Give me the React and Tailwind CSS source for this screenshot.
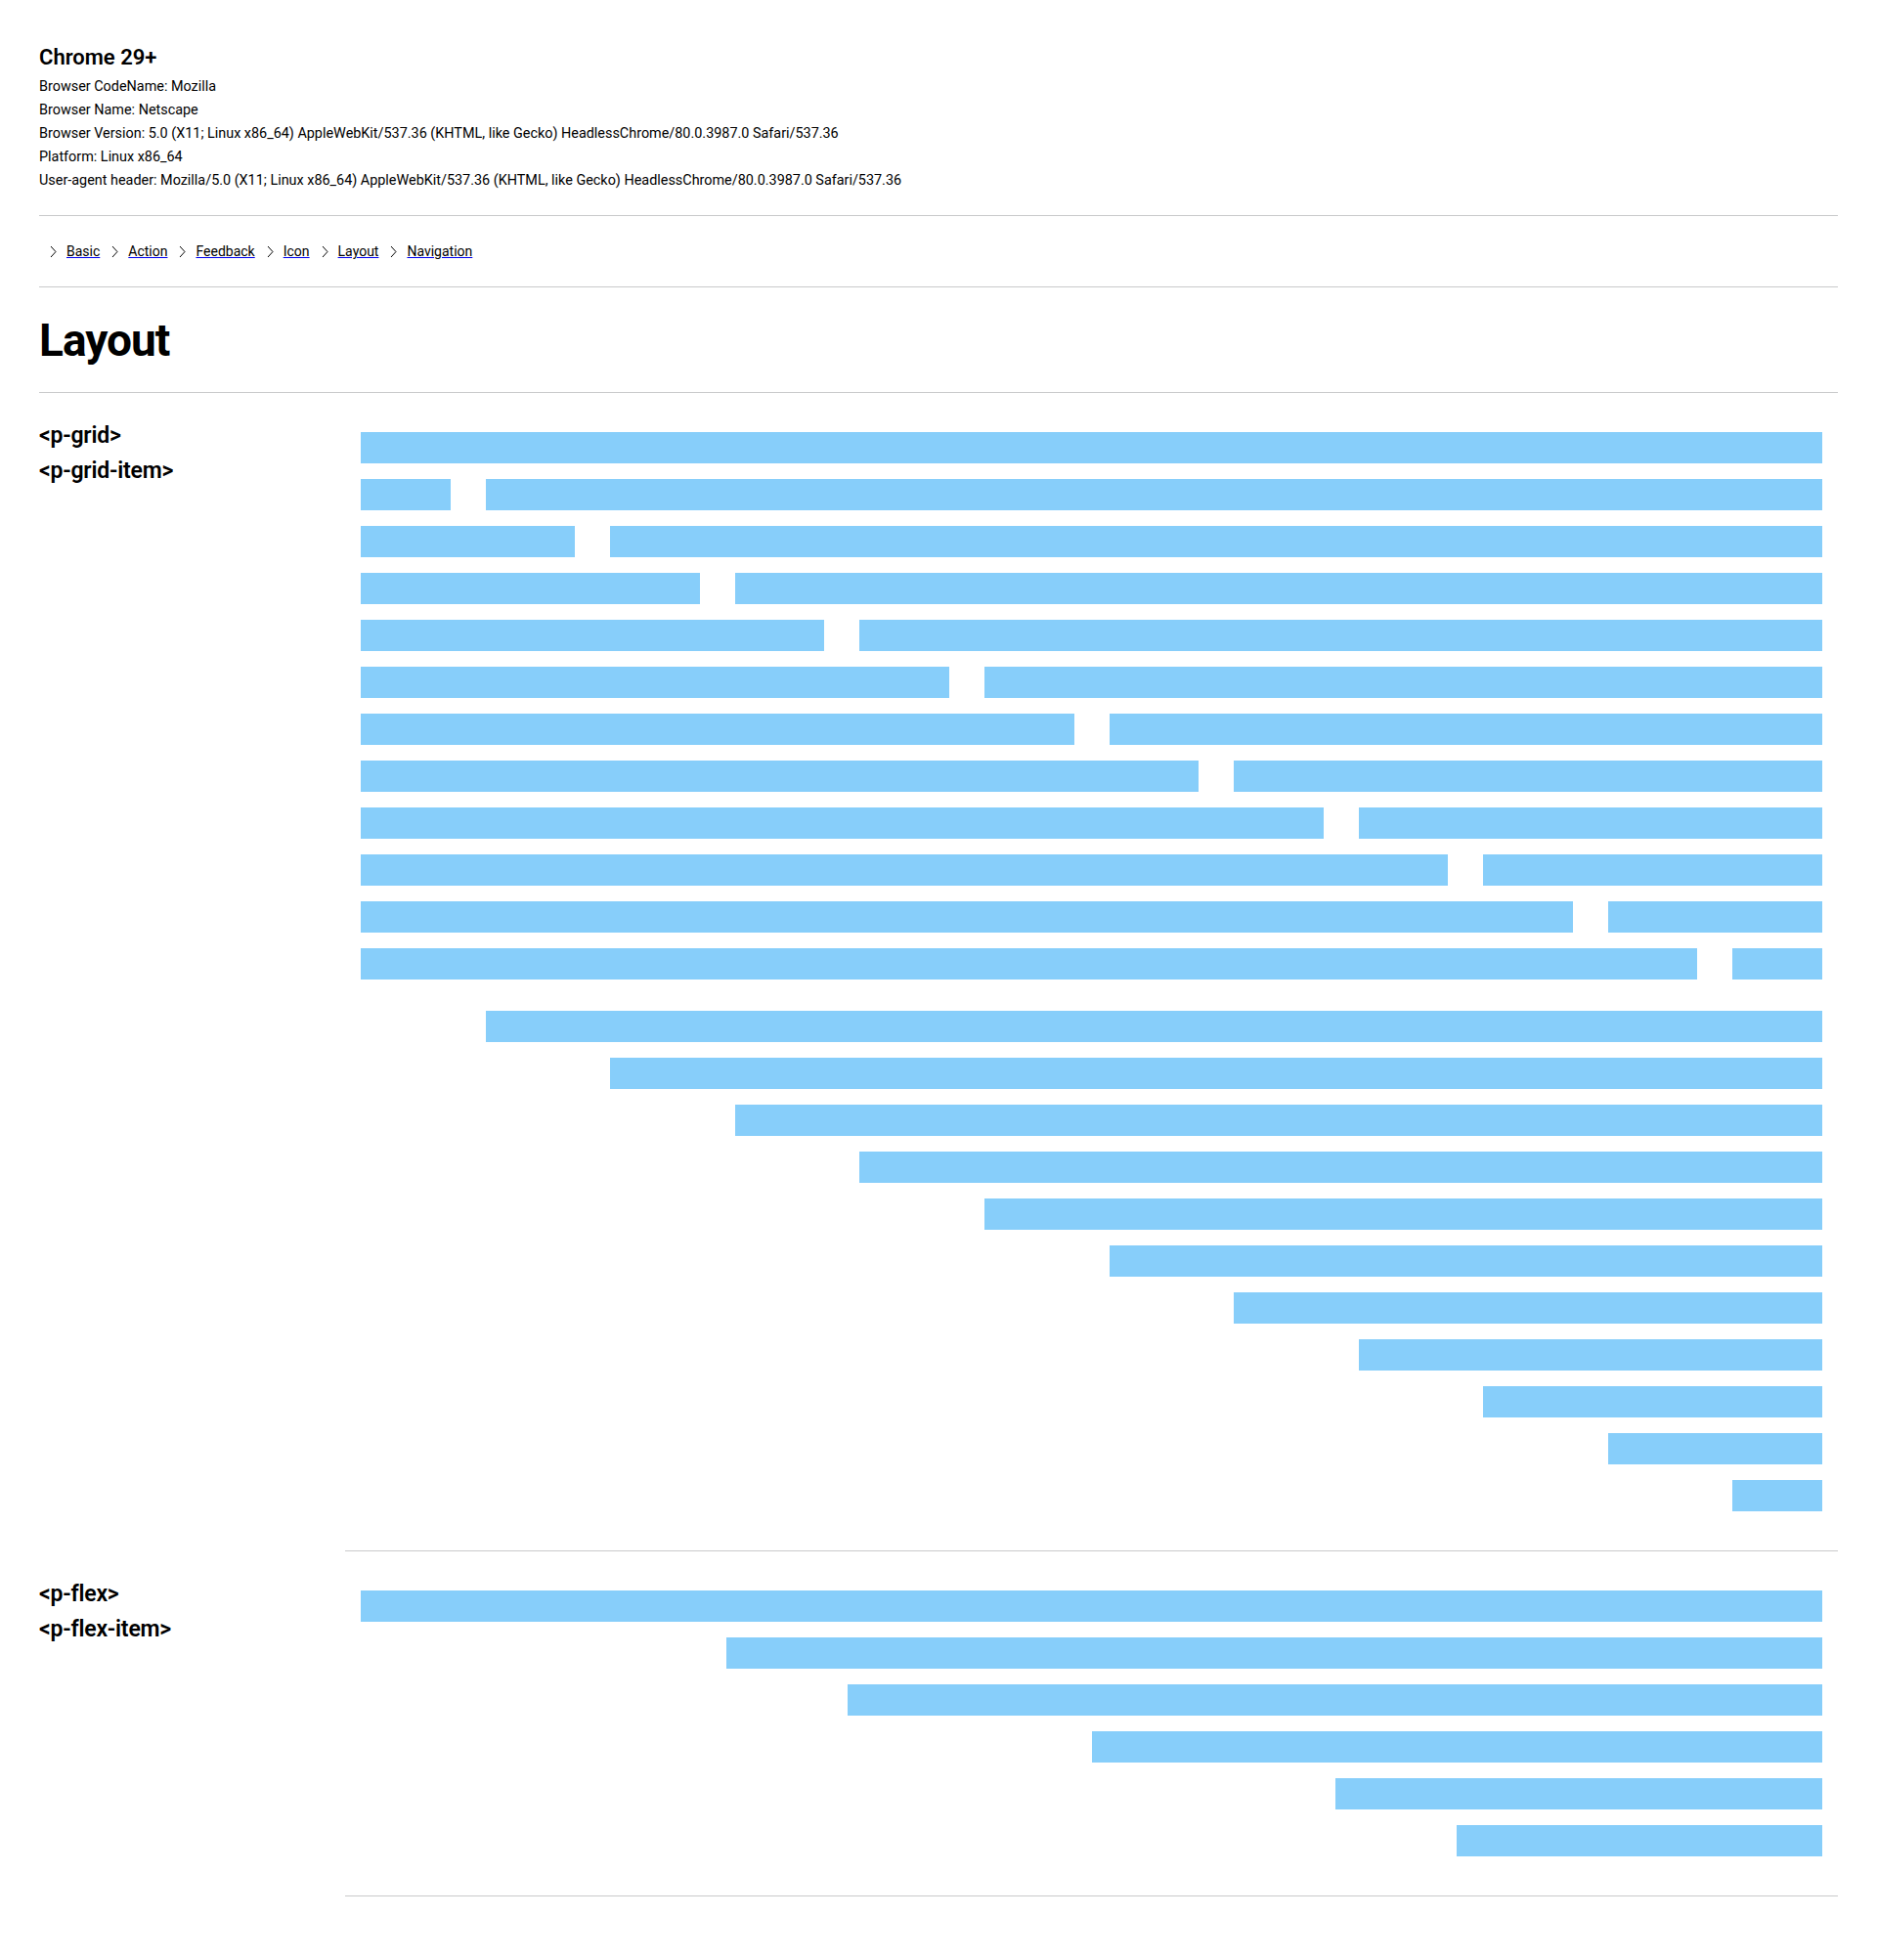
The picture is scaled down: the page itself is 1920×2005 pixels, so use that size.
const infoLines = [
    'Browser CodeName: Mozilla',
    'Browser Name: Netscape',
    'Browser Version: 5.0 (X11; Linux x86_64) AppleWebKit/537.36 (KHTML, like Gecko) HeadlessChrome/80.0.3987.0 Safari/537.36',
    'Platform: Linux x86_64',
    'User-agent header: Mozilla/5.0 (X11; Linux x86_64) AppleWebKit/537.36 (KHTML, like Gecko) HeadlessChrome/80.0.3987.0 Safari/537.36',
]

const crumbs = ['Basic', 'Action', 'Feedback', 'Icon', 'Layout', 'Navigation']

// col-span / col-start classes written out so tailwind picks them up
const spans = [
    'col-span-1', 'col-span-2', 'col-span-3', 'col-span-4', 'col-span-5', 'col-span-6',
    'col-span-7', 'col-span-8', 'col-span-9', 'col-span-10', 'col-span-11', 'col-span-12',
]
const starts = [
    'col-start-1', 'col-start-2', 'col-start-3', 'col-start-4', 'col-start-5', 'col-start-6',
    'col-start-7', 'col-start-8', 'col-start-9', 'col-start-10', 'col-start-11', 'col-start-12',
]

const flexWidths = ['w-full', 'w-3/4', 'w-2/3', 'w-1/2', 'w-1/3', 'w-1/4']

function Chevron() {
    return (
        <svg width="7" height="13" viewBox="0 0 7 13" fill="none" className="shrink-0">
            <polyline points="1,1 6,6.5 1,12" stroke="#000" strokeWidth="1" />
        </svg>
    )
}

function Bar({ className = '' }) {
    return <div className={`h-8 bg-[#87cefa] ${className}`} />
}

function Section({ labels, children }) {
    return (
        <div className="grid grid-cols-[313px_1fr]">
            <div className="pt-[26px] font-semibold text-[23px] leading-[36px] tracking-[-0.2px] text-black">
                {labels.map((l) => (
                    <div key={l}>{l}</div>
                ))}
            </div>
            <div className="border-b border-[#c9cacb] py-10 px-4">{children}</div>
        </div>
    )
}

function GridDemo() {
    const rows = []
    rows.push(
        <div key="full" className="grid grid-cols-12 gap-x-9">
            <Bar className="col-span-12" />
        </div>
    )
    for (let i = 1; i < 12; i++) {
        rows.push(
            <div key={'s' + i} className="grid grid-cols-12 gap-x-9">
                <Bar className={spans[i - 1]} />
                <Bar className={spans[11 - i]} />
            </div>
        )
    }
    const offsets = []
    for (let i = 1; i < 12; i++) {
        offsets.push(
            <div key={'o' + i} className="grid grid-cols-12 gap-x-9">
                <Bar className={`${starts[i]} ${spans[11 - i]}`} />
            </div>
        )
    }
    return (
        <div>
            <div className="flex flex-col gap-4">{rows}</div>
            <div className="flex flex-col gap-4 mt-8">{offsets}</div>
        </div>
    )
}

function FlexDemo() {
    return (
        <div className="flex flex-col gap-4">
            {flexWidths.map((w) => (
                <div key={w} className="flex justify-end">
                    <Bar className={w} />
                </div>
            ))}
        </div>
    )
}

export default function App() {
    return (
        <div className="min-h-[2005px] bg-white px-10 pt-[45px] pb-16 font-['Roboto',sans-serif] text-black">
            <header className="pb-[23px] border-b border-[#c9cacb]">
                <h1 className="text-[22px] leading-[28px] font-semibold mb-1">Chrome 29+</h1>
                <div className="text-[14.4px] leading-6">
                    {infoLines.map((l) => (
                        <p key={l}>{l}</p>
                    ))}
                </div>
            </header>

            <nav className="py-6 border-b border-[#c9cacb] flex items-center pl-[11px] text-[14px] leading-6">
                {crumbs.map((c) => (
                    <span key={c} className="flex items-center">
                        <Chevron />
                        <a href="#" className="ml-[10px] mr-[12px] underline decoration-[#0000ee]">
                            {c}
                        </a>
                    </span>
                ))}
            </nav>

            <h2 className="pt-[26px] pb-[25px] border-b border-[#c9cacb] text-[46px] leading-[56px] tracking-[-1px] font-bold">
                Layout
            </h2>

            <Section labels={['<p-grid>', '<p-grid-item>']}>
                <GridDemo />
            </Section>
            <Section labels={['<p-flex>', '<p-flex-item>']}>
                <FlexDemo />
            </Section>
        </div>
    )
}
